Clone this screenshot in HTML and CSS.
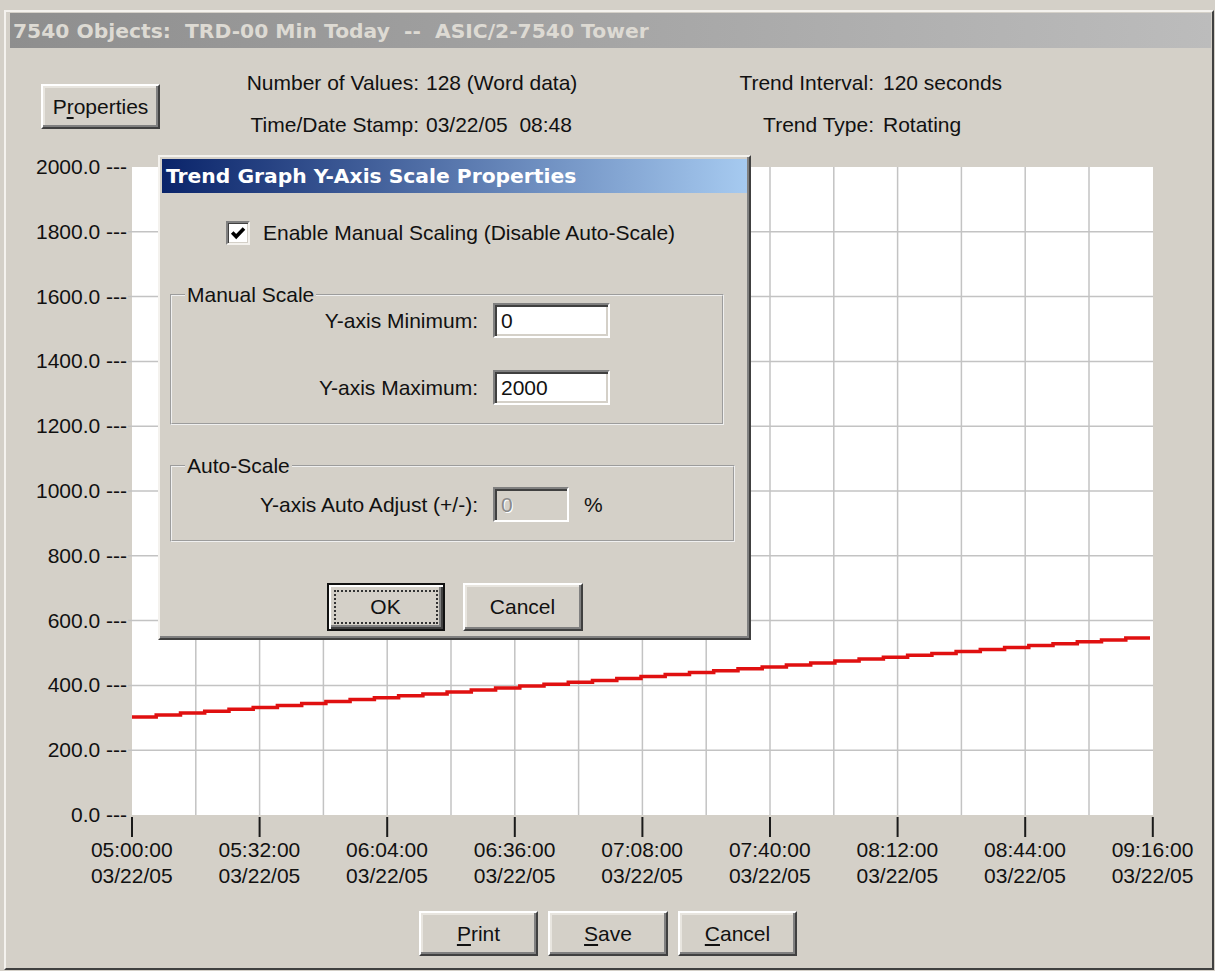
FILE: index.html
```html
<!DOCTYPE html>
<html lang="en">
<head>
<meta charset="utf-8">
<title>7540 Objects: TRD-00 Min Today</title>
<link rel="stylesheet" href="styles.css">
</head>
<body>
<div class="window">
  <div class="titlebar inactive">7540 Objects:  TRD-00 Min Today  --  ASIC/2-7540 Tower</div>

  <div class="header">
    <button class="btn btn-props">P<u>r</u>operties</button>
    <div class="info">
      <span class="lbl">Number of Values:</span><span class="val">128 (Word data)</span>
      <span class="lbl">Trend Interval:</span><span class="val v2">120 seconds</span>
      <span class="lbl">Time/Date Stamp:</span><span class="val">03/22/05  08:48</span>
      <span class="lbl">Trend Type:</span><span class="val v2">Rotating</span>
    </div>
  </div>

  <div class="chart">
    <div class="y-labels">
      <span>2000.0 ---</span>
      <span>1800.0 ---</span>
      <span>1600.0 ---</span>
      <span>1400.0 ---</span>
      <span>1200.0 ---</span>
      <span>1000.0 ---</span>
      <span>800.0 ---</span>
      <span>600.0 ---</span>
      <span>400.0 ---</span>
      <span>200.0 ---</span>
      <span>0.0 ---</span>
    </div>
    <svg class="plot" width="1028" height="682" viewBox="0 0 1028 682">
      <rect x="4" y="12" width="1021" height="648" fill="#fff"/>
      <g class="grid-h" stroke="#c3c3c3" stroke-width="1.5">
        <line x1="0" y1="76.8" x2="1025" y2="76.8"/>
        <line x1="0" y1="141.6" x2="1025" y2="141.6"/>
        <line x1="0" y1="206.4" x2="1025" y2="206.4"/>
        <line x1="0" y1="271.2" x2="1025" y2="271.2"/>
        <line x1="0" y1="336" x2="1025" y2="336"/>
        <line x1="0" y1="400.8" x2="1025" y2="400.8"/>
        <line x1="0" y1="465.6" x2="1025" y2="465.6"/>
        <line x1="0" y1="530.4" x2="1025" y2="530.4"/>
        <line x1="0" y1="595.2" x2="1025" y2="595.2"/>
      </g>
      <g class="grid-v" stroke="#c3c3c3" stroke-width="1.5">
        <line x1="67.8" y1="12" x2="67.8" y2="660"/>
        <line x1="131.6" y1="12" x2="131.6" y2="660"/>
        <line x1="195.4" y1="12" x2="195.4" y2="660"/>
        <line x1="259.2" y1="12" x2="259.2" y2="660"/>
        <line x1="323" y1="12" x2="323" y2="660"/>
        <line x1="386.8" y1="12" x2="386.8" y2="660"/>
        <line x1="450.6" y1="12" x2="450.6" y2="660"/>
        <line x1="514.4" y1="12" x2="514.4" y2="660"/>
        <line x1="578.2" y1="12" x2="578.2" y2="660"/>
        <line x1="642" y1="12" x2="642" y2="660"/>
        <line x1="705.8" y1="12" x2="705.8" y2="660"/>
        <line x1="769.6" y1="12" x2="769.6" y2="660"/>
        <line x1="833.4" y1="12" x2="833.4" y2="660"/>
        <line x1="897.2" y1="12" x2="897.2" y2="660"/>
        <line x1="961" y1="12" x2="961" y2="660"/>
      </g>
      <g class="ticks" stroke="#1a1a1a" stroke-width="2">
        <line x1="4" y1="662" x2="4" y2="682"/>
        <line x1="131.6" y1="662" x2="131.6" y2="682"/>
        <line x1="259.2" y1="662" x2="259.2" y2="682"/>
        <line x1="386.8" y1="662" x2="386.8" y2="682"/>
        <line x1="514.4" y1="662" x2="514.4" y2="682"/>
        <line x1="642" y1="662" x2="642" y2="682"/>
        <line x1="769.6" y1="662" x2="769.6" y2="682"/>
        <line x1="897.2" y1="662" x2="897.2" y2="682"/>
        <line x1="1024.8" y1="662" x2="1024.8" y2="682"/>
      </g>
      <path class="trend" fill="none" stroke="#e01010" stroke-width="3.5"
        d="M4 562H28.2V560.1H52.5V558.1H76.7V556.2H101V554.3H125.2V552.4H149.4V550.4H173.7V548.5H197.9V546.6H222.1V544.6H246.4V542.7H270.6V540.8H294.9V538.9H319.1V536.9H343.3V535H367.6V533.1H391.8V531.1H416V529.2H440.3V527.3H464.5V525.4H488.8V523.4H513V521.5H537.2V519.6H561.5V517.6H585.7V515.7H610V513.8H634.2V511.9H658.4V509.9H682.7V508H706.9V506.1H731.1V504.1H755.4V502.2H779.6V500.3H803.9V498.4H828.1V496.4H852.3V494.5H876.6V492.6H900.8V490.6H925V488.7H949.3V486.8H973.5V484.9H997.8V482.9H1022"/>
    </svg>
  </div>

  <div class="x-labels">
    <span>05:00:00<br>03/22/05</span>
    <span>05:32:00<br>03/22/05</span>
    <span>06:04:00<br>03/22/05</span>
    <span>06:36:00<br>03/22/05</span>
    <span>07:08:00<br>03/22/05</span>
    <span>07:40:00<br>03/22/05</span>
    <span>08:12:00<br>03/22/05</span>
    <span>08:44:00<br>03/22/05</span>
    <span>09:16:00<br>03/22/05</span>
  </div>

  <div class="actions">
    <button class="btn"><u>P</u>rint</button>
    <button class="btn btn-wide"><u>S</u>ave</button>
    <button class="btn"><u>C</u>ancel</button>
  </div>

  <div class="dialog" role="dialog" aria-labelledby="dlg-title">
    <div class="titlebar active" id="dlg-title">Trend Graph Y-Axis Scale Properties</div>
    <div class="dlg-body">
      <label class="check-row">
        <span class="check"><svg width="16" height="16" viewBox="0 0 16 16"><path d="M2.2 7.6 L6.2 11.6 L14 3.6" fill="none" stroke="#000" stroke-width="3.6"/></svg></span>
        Enable Manual Scaling (Disable Auto-Scale)
      </label>

      <fieldset class="group group-manual">
        <legend>Manual Scale</legend>
        <div class="field-grid">
          <span class="field-lbl">Y-axis Minimum:</span><span class="edit">0</span>
          <span class="field-lbl">Y-axis Maximum:</span><span class="edit">2000</span>
        </div>
      </fieldset>

      <fieldset class="group group-auto">
        <legend>Auto-Scale</legend>
        <div class="field-grid auto">
          <span class="field-lbl">Y-axis Auto Adjust (+/-):</span><span class="edit disabled">0</span><span class="unit">%</span>
        </div>
      </fieldset>

      <div class="dlg-buttons">
        <button class="btn btn-default"><span class="focus">OK</span></button>
        <button class="btn btn-cancel">Cancel</button>
      </div>
    </div>
  </div>
</div>
</body>
</html>
```

FILE: styles.css
```css
html, body {
  margin: 0;
  overflow: hidden;
}

body {
  background: #d4d0c8;
  padding: 10px 1px 0 4px;
  font-family: "Liberation Sans", Arial, sans-serif;
  font-size: 21px;
  color: #111;
}

/* ---------- main window ---------- */
.window {
  position: relative;
  box-sizing: border-box;
  width: 1210px;
  height: 960px;
  border: 2px solid;
  border-color: #f4f2ee #404040 #404040 #f4f2ee;
  padding: 1px 1px 0 4px;
  background: #d4d0c8;
}

.titlebar {
  display: flex;
  align-items: center;
  font-family: "DejaVu Sans", Verdana, sans-serif;
  font-weight: bold;
  font-size: 20.3px;
  white-space: pre;
}

.titlebar.inactive {
  height: 35px;
  padding-left: 3px;
  background: linear-gradient(to right, #8e8e8e, #bcbcbc);
  color: #dddad3;
}

/* ---------- buttons ---------- */
.btn {
  box-sizing: border-box;
  display: flex;
  align-items: center;
  justify-content: center;
  padding: 0;
  font: inherit;
  color: #111;
  background: #d4d0c8;
  border: 2px solid;
  border-color: #fff #404040 #404040 #fff;
  box-shadow: inset -2px -2px 0 #808080, inset 2px 2px 0 #e8e5df;
}

.btn u {
  text-underline-offset: 3px;
}

/* ---------- header ---------- */
.header {
  display: flex;
  align-items: flex-start;
  height: 107px;
}

.btn-props {
  width: 119px;
  height: 45px;
  margin: 36px 0 0 31px;
}

.info {
  display: grid;
  grid-template-columns: 259px 274px 181px auto;
  grid-auto-rows: 42px;
  align-items: center;
  margin-top: 14px;
}

.info .lbl {
  text-align: right;
}

.info .val {
  padding-left: 7px;
  white-space: pre;
}

.info .val.v2 {
  padding-left: 9px;
}

/* ---------- chart ---------- */
.chart {
  display: grid;
  grid-template-columns: 117px 1028px;
  column-gap: 1px;
}

.y-labels {
  display: flex;
  flex-direction: column;
  justify-content: space-between;
  height: 672px;
  line-height: 24px;
  text-align: right;
  white-space: pre;
}

.plot {
  display: block;
}

.x-labels {
  display: grid;
  grid-template-columns: repeat(9, 127.6px);
  margin-left: 58px;
  line-height: 26px;
  text-align: center;
}

.actions {
  display: flex;
  justify-content: center;
  gap: 10px;
  margin-top: 22px;
  padding-right: 5px;
}

.actions .btn {
  width: 119px;
  height: 45px;
}

.actions .btn-wide {
  width: 120px;
}

/* ---------- scale properties dialog ---------- */
.dialog {
  position: absolute;
  left: 152px;
  top: 143px;
  width: 593px;
  box-sizing: border-box;
  border: 2px solid;
  border-color: #f4f2ee #404040 #404040 #f4f2ee;
  box-shadow: inset -2px -2px 0 #808080;
  padding: 2px;
  background: #d4d0c8;
}

.titlebar.active {
  height: 34px;
  padding-left: 4px;
  background: linear-gradient(to right, #0a246a, #a6caf0);
  color: #fff;
}

.check-row {
  display: flex;
  align-items: center;
  gap: 13px;
  height: 24px;
  margin: 28px 0 0 64px;
}

.check {
  box-sizing: border-box;
  display: flex;
  align-items: center;
  justify-content: center;
  width: 24px;
  height: 24px;
  background: #fff;
  border: 2px solid;
  border-color: #808080 #f4f2ee #f4f2ee #808080;
  box-shadow: inset 1px 1px 0 #404040, inset -1px -1px 0 #d4d0c8;
}

.check svg {
  display: block;
}

.group {
  box-sizing: border-box;
  margin: 0;
  padding: 0 0 18px;
  border: 2px groove #f0f0f0;
  min-inline-size: 0;
}

.group legend {
  padding: 0 2px;
  margin-left: 13px;
  line-height: 24px;
}

.group-manual {
  width: 554px;
  margin: 38px 0 0 8px;
}

.group-auto {
  width: 565px;
  margin: 29px 0 0 8px;
}

.field-grid {
  display: grid;
  grid-template-columns: 306px 117px;
  grid-auto-rows: 35px;
  column-gap: 15px;
  row-gap: 32px;
  align-items: center;
  margin-top: -4px;
}

.field-grid.auto {
  grid-template-columns: 306px 76px auto;
  margin-top: 9px;
}

.field-lbl {
  text-align: right;
}

.edit {
  box-sizing: border-box;
  display: flex;
  align-items: center;
  height: 35px;
  padding-left: 6px;
  background: #fff;
  border: 2px solid;
  border-color: #808080 #fff #fff #808080;
  box-shadow: inset 2px 2px 0 #404040, inset -2px -2px 0 #d4d0c8;
}

.edit.disabled {
  background: #d4d0c8;
  color: #8a8a8a;
  text-shadow: 1px 1px 0 #fff;
}

.dlg-buttons {
  display: flex;
  justify-content: center;
  gap: 18px;
  margin: 41px 0 5px;
}

.dlg-buttons .btn {
  height: 48px;
}

.btn-default {
  width: 118px;
  padding: 5px;
  border: 2px solid #111;
  box-shadow: inset 2px 2px 0 #fff, inset -2px -2px 0 #404040, inset -4px -4px 0 #808080;
}

.btn-default .focus {
  flex: 1;
  align-self: stretch;
  display: flex;
  align-items: center;
  justify-content: center;
  border: 2px dotted #333;
}

.btn-cancel {
  width: 120px;
}
```
